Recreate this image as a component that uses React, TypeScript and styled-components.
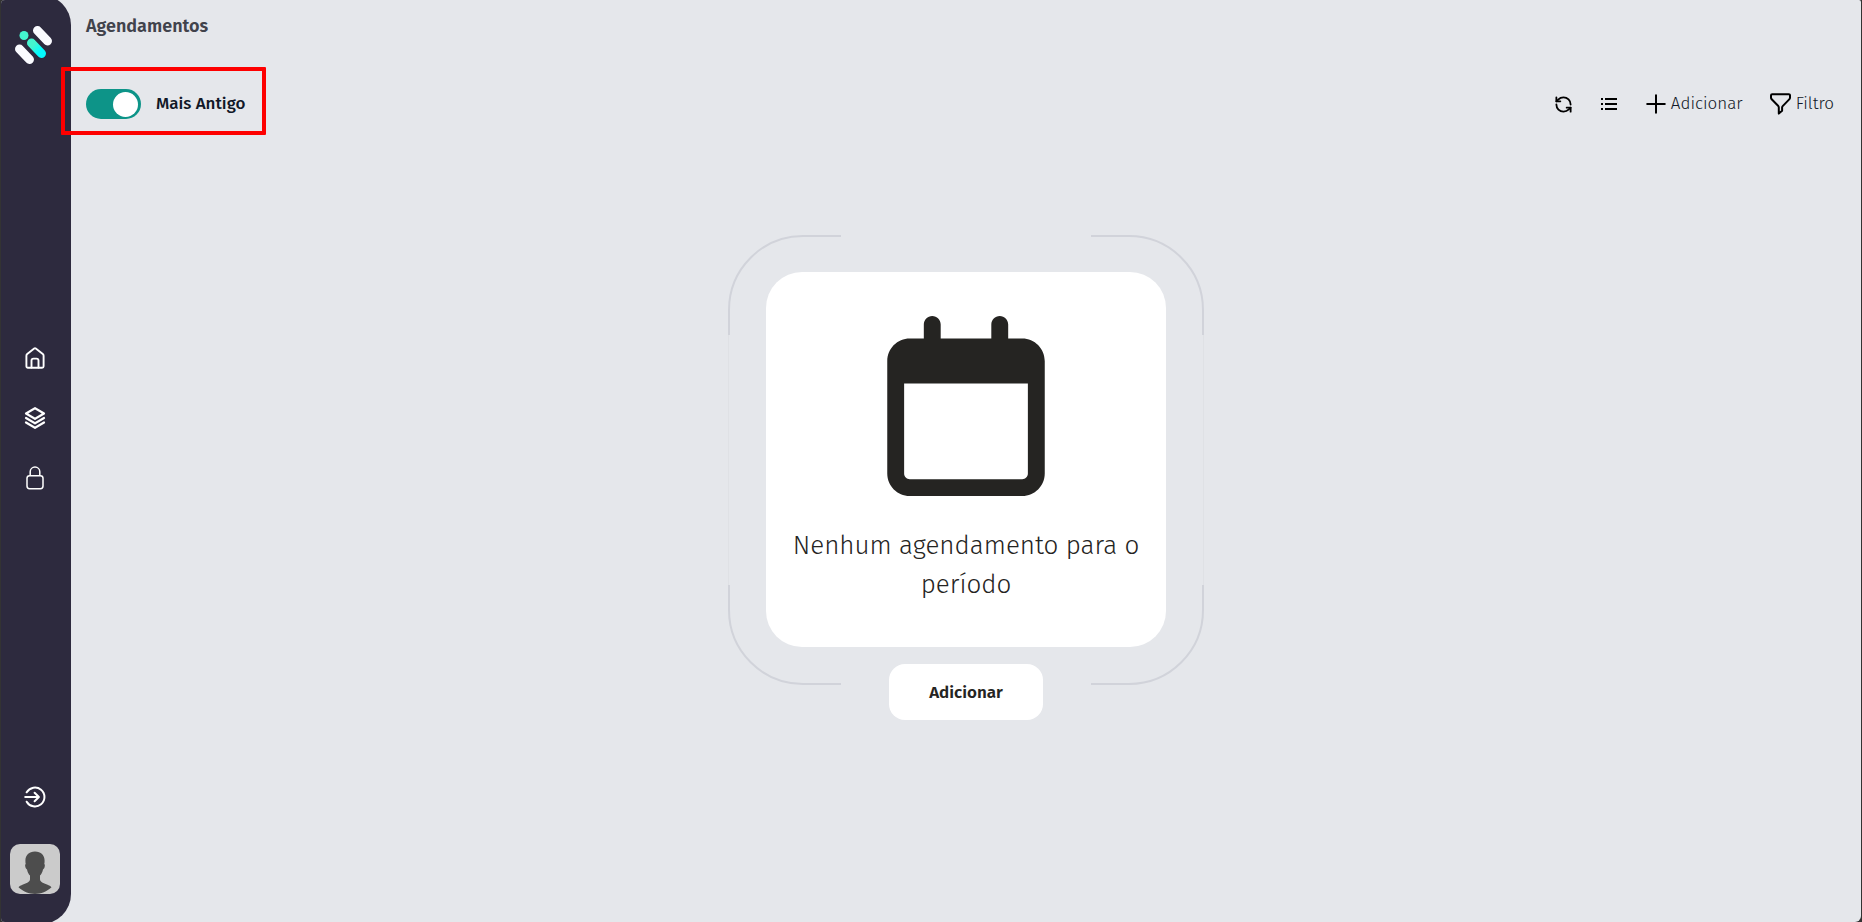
import React, { useState } from "react";
import styled, { createGlobalStyle } from "styled-components";
import { RefreshCcw } from "lucide-react";
import { PiStackBold } from "react-icons/pi";

const GlobalStyle = createGlobalStyle`
  *, *::before, *::after { box-sizing: border-box; }
  body {
    margin: 0;
    background: #333333;
    font-family: "Fira Sans", "Noto Sans", "Open Sans", sans-serif;
    color: #111827;
  }
  button { font: inherit; color: inherit; border: 0; background: none; padding: 0; cursor: pointer; }
  svg { display: block; }
`;

const Shell = styled.div`
  display: flex;
  min-height: 100vh;
  padding: 0 1px;
  overflow: hidden;
`;

const Page = styled.div`
  display: flex;
  flex: 1;
  background: #e5e7eb;
  border-radius: 4px 2px 6px 4px;
  overflow: hidden;
`;

const Sidebar = styled.aside`
  display: flex;
  flex-direction: column;
  align-items: center;
  justify-content: space-between;
  width: 70px;
  margin: -5px 0 -2px;
  padding: 31px 2px 30px 0;
  border-radius: 0 30px 30px 0;
  background: #2d2a3e;
  color: #ffffff;
`;

const Nav = styled.nav`
  display: flex;
  flex-direction: column;
  gap: 36px;
`;

const NavLink = styled.a`
  display: grid;
  place-items: center;
  width: 24px;
  height: 24px;
  color: inherit;
`;

const SidebarFooter = styled.div`
  display: flex;
  flex-direction: column;
  align-items: center;
  gap: 22px;
`;

const LogoutButton = styled.button`
  display: grid;
  place-items: center;
  width: 50px;
  height: 50px;
`;

const Avatar = styled.button`
  width: 50px;
  height: 50px;
  border-radius: 10px;
  overflow: hidden;
`;

const Main = styled.main`
  display: flex;
  flex-direction: column;
  flex: 1;
  padding: 12px 27px 24px 15px;
`;

const Title = styled.h1`
  margin: 0;
  font-size: 18px;
  line-height: 28px;
  font-weight: 600;
  color: #41434c;
`;

const Toolbar = styled.div`
  display: flex;
  align-items: center;
  justify-content: space-between;
  margin-top: 44px;
  height: 40px;
`;

const SortSwitch = styled.label`
  position: relative;
  display: flex;
  align-items: center;
  gap: 15px;
  font-size: 17px;
  line-height: 24px;
  font-weight: 500;
  cursor: pointer;
`;

const SwitchInput = styled.input`
  appearance: none;
  display: flex;
  align-items: center;
  width: 55px;
  height: 30px;
  margin: 0;
  padding: 0 3px;
  border-radius: 15px;
  background: #9ca3af;
  cursor: pointer;

  &::before {
    content: "";
    width: 25px;
    height: 25px;
    border-radius: 50%;
    background: #ffffff;
  }

  &:checked {
    justify-content: flex-end;
    background: #0d9488;
  }
`;

const Highlight = styled.span`
  position: absolute;
  inset: -22px -21px -16px -25px;
  border: 4px solid #fe0000;
  border-radius: 1px;
  pointer-events: none;
`;

const Actions = styled.div`
  display: flex;
  align-items: center;
  gap: 27px;
`;

const Action = styled.button`
  display: flex;
  align-items: center;
  justify-content: center;
  gap: 5px;
  min-width: 19px;
  font-size: 17px;
  line-height: 24px;
  font-weight: 300;

  svg {
    color: #000000;
  }
`;

const EmptyState = styled.section`
  display: flex;
  flex-direction: column;
  align-items: center;
  margin: 111px -12px 0 0;
`;

const Frame = styled.div`
  position: relative;
  padding: 35px 36px 36px;
  border: 2px solid #d1d3da;
  border-radius: 75px;

  &::before,
  &::after {
    content: "";
    position: absolute;
    background: #e5e7eb;
  }

  &::before {
    inset: -2px 111px;
  }

  &::after {
    inset: 98px -2px;
    border: solid #dfe1e5;
    border-width: 0 1px;
  }
`;

const Card = styled.div`
  position: relative;
  z-index: 1;
  display: flex;
  flex-direction: column;
  align-items: center;
  gap: 30px;
  width: 400px;
  min-height: 375px;
  padding: 44px 24px 40px;
  border-radius: 36px;
  background: #ffffff;
`;

const Message = styled.p`
  margin: 0;
  font-size: 26px;
  line-height: 39px;
  font-weight: 300;
  text-align: center;
  color: #252422;
`;

const AddButton = styled.button`
  position: relative;
  z-index: 1;
  min-width: 154px;
  height: 56px;
  margin-top: -21px;
  border-radius: 16px;
  background: #ffffff;
  color: #252422;
  font-size: 17px;
  font-weight: 600;
`;

const Logo = () => (
  <svg width="40" height="38" viewBox="0 0 40 38" role="img" aria-label="Logo">
    <defs>
      <linearGradient id="logoBar" x1="0" y1="0" x2="1" y2="1">
        <stop offset="0.2" stopColor="#44f5cf" />
        <stop offset="0.8" stopColor="#04fbfe" />
      </linearGradient>
    </defs>
    <g fill="none" strokeWidth="9" strokeLinecap="round">
      <path d="M22.500 4.500L32.500 15" stroke="#fafbff" />
      <path d="M4.500 23L14.500 33.500" stroke="#fafbff" />
      <path d="M16.500 17L26.500 27.500" stroke="url(#logoBar)" />
    </g>
    <circle cx="9" cy="9.500" r="4.500" fill="#44f5cf" />
  </svg>
);

const HomeIcon = () => (
  <svg width="20" height="22" viewBox="0 0 20 22" fill="none" stroke="currentColor" strokeWidth="1.900" strokeLinecap="round" strokeLinejoin="round">
    <path d="M1.400 8.700c0-.7.300-1.300.8-1.700L9.200 1.500a1.300 1.300 0 0 1 1.600 0l7 5.500c.5.400.8 1 .8 1.700v10.600a1.500 1.500 0 0 1-1.500 1.500H2.900a1.500 1.500 0 0 1-1.500-1.500z" />
    <path d="M6.500 20.500v-6.900a2 2 0 0 1 2-2h3a2 2 0 0 1 2 2v6.900" />
  </svg>
);

const LockIcon = () => (
  <svg width="18" height="24" viewBox="0 0 18 24" fill="none" stroke="currentColor" strokeWidth="1.500">
    <rect x="1" y="9.700" width="16" height="13" rx="2.600" />
    <path d="M4.200 9.700V5.800a4.800 4.800 0 0 1 9.600 0v3.900" />
  </svg>
);

const LogoutIcon = () => (
  <svg width="22" height="22" viewBox="0 0 22 22" fill="none" stroke="currentColor" strokeWidth="2" strokeLinecap="round" strokeLinejoin="round">
    <path d="M2.700 6.300a9.500 9.500 0 1 1 0 9.400" />
    <path d="M1.200 11h13.600M10.600 6.700L14.900 11l-4.300 4.300" />
  </svg>
);

const AvatarPicture = () => (
  <svg width="50" height="50" viewBox="0 0 50 50">
    <rect width="50" height="50" fill="#cbcbcb" />
    <path
      d="M25 7.500c-6 0-9.600 3.800-9.600 9.300 0 1.100.1 2.300.3 3.300-.7.400-.7 1.500-.3 2.900.3 1.300.9 2.200 1.600 2.400.6 2.800 1.600 4.700 3 6.200v3.600c0 2.600-3.600 4-7 5.300-2.200.8-3.700 1.800-4.500 2.800C13 47.600 19 50 25 50s12-2.400 16.500-6.700c-.8-1-2.300-2-4.500-2.800-3.400-1.300-7-2.700-7-5.300v-3.600c1.400-1.500 2.400-3.400 3-6.200.7-.2 1.300-1.100 1.600-2.400.4-1.400.4-2.500-.3-2.900.2-1 .3-2.200.3-3.300 0-5.500-3.600-9.300-9.600-9.300z"
      fill="#4d4d4d"
    />
  </svg>
);

const ListIcon = () => (
  <svg width="16" height="16" viewBox="0 0 16 16" stroke="currentColor" strokeWidth="1.800">
    <path d="M0 3h2M0 8h2M0 13h2M4 3h12M4 8h12M4 13h12" />
  </svg>
);

const PlusIcon = () => (
  <svg width="20" height="20" viewBox="0 0 20 20" stroke="currentColor" strokeWidth="2" strokeLinecap="round">
    <path d="M10 1.200v17.600M1.200 10h17.600" />
  </svg>
);

const FunnelIcon = () => (
  <svg width="21" height="22" viewBox="0 0 21 22" fill="none" stroke="currentColor" strokeWidth="2" strokeLinejoin="round">
    <path d="M2.200 1.200h16.600a1.200 1.200 0 0 1 1.200 1.200v2c0 .8-.3 1.500-.8 2l-6.500 6.700c-.4.400-.6.900-.6 1.500v3.200L8.800 20.600v-6.200c0-.5-.2-1-.5-1.400L1.700 6.300C1.200 5.800 1 5.200 1 4.500V2.400a1.200 1.200 0 0 1 1.200-1.200z" />
  </svg>
);

const CalendarIcon = () => (
  <svg width="158" height="180" viewBox="0 0 448 512" fill="#252422" aria-hidden="true">
    <path d="M152 24c0-13.300-10.700-24-24-24s-24 10.700-24 24v40H64C28.700 64 0 92.700 0 128v320c0 35.300 28.700 64 64 64h320c35.300 0 64-28.700 64-64V128c0-35.300-28.700-64-64-64h-40V24c0-13.300-10.700-24-24-24s-24 10.700-24 24v40H152V24zM48 192h352v256c0 8.800-7.200 16-16 16H64c-8.800 0-16-7.200-16-16V192z" />
  </svg>
);

export default function App() {
  const [oldestFirst, setOldestFirst] = useState(true);

  return (
    <>
      <GlobalStyle />
      <Shell>
        <Page>
          <Sidebar>
            <Logo />
            <Nav>
              <NavLink href="#inicio" aria-label="Início"><HomeIcon /></NavLink>
              <NavLink href="#modulos" aria-label="Módulos"><PiStackBold size={24} /></NavLink>
              <NavLink href="#seguranca" aria-label="Segurança"><LockIcon /></NavLink>
            </Nav>
            <SidebarFooter>
              <LogoutButton aria-label="Sair"><LogoutIcon /></LogoutButton>
              <Avatar aria-label="Perfil"><AvatarPicture /></Avatar>
            </SidebarFooter>
          </Sidebar>
          <Main>
            <Title>Agendamentos</Title>
            <Toolbar>
              <SortSwitch>
                <SwitchInput
                  type="checkbox"
                  role="switch"
                  checked={oldestFirst}
                  onChange={(event) => setOldestFirst(event.target.checked)}
                />
                Mais Antigo
                <Highlight />
              </SortSwitch>
              <Actions>
                <Action aria-label="Atualizar"><RefreshCcw size={19} strokeWidth={2.3} /></Action>
                <Action aria-label="Lista"><ListIcon /></Action>
                <Action><PlusIcon />Adicionar</Action>
                <Action><FunnelIcon />Filtro</Action>
              </Actions>
            </Toolbar>
            <EmptyState>
              <Frame>
                <Card>
                  <CalendarIcon />
                  <Message>Nenhum agendamento para o período</Message>
                </Card>
              </Frame>
              <AddButton>Adicionar</AddButton>
            </EmptyState>
          </Main>
        </Page>
      </Shell>
    </>
  );
}
